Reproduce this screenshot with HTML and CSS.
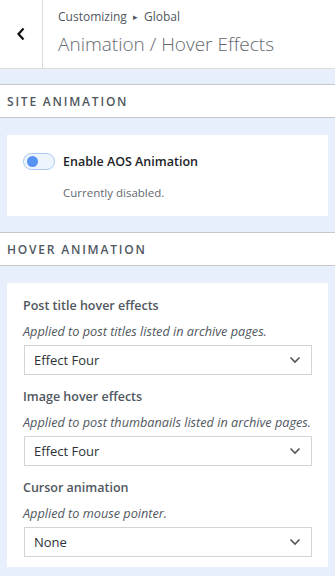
FILE: index.html
```html
<!DOCTYPE html>
<html lang="en">
  <head>
    <meta charset="UTF-8" />
    <meta name="viewport" content="width=device-width, initial-scale=1.0" />
    <title>Animation / Hover Effects</title>
    <link rel="stylesheet" href="styles.css">
  </head>
  <body>
    <header class="section-head">
      <button class="back" type="button" aria-label="Back">
        <svg width="10" height="14" viewBox="0 0 10 14"><path d="M7.5 1.5 L2.5 7 L7.5 12.5" fill="none" stroke="#111" stroke-width="2.2" /></svg>
      </button>
      <div class="titles">
        <span class="crumb">Customizing <span class="arrow">&#9656;</span> Global</span>
        <h3>Animation / Hover Effects</h3>
      </div>
    </header>

    <section class="group">
      <h4 class="group-title">Site Animation</h4>
      <div class="card">
        <label class="toggle-row">
          <span class="toggle"><span class="knob"></span></span>
          <span class="toggle-label">Enable AOS Animation</span>
        </label>
        <p class="status">Currently disabled.</p>
      </div>
    </section>

    <section class="group">
      <h4 class="group-title">Hover Animation</h4>
      <div class="card fields">
        <div class="field">
          <span class="field-title">Post title hover effects</span>
          <span class="field-desc">Applied to post titles listed in archive pages.</span>
          <div class="select"><span>Effect Four</span><svg width="12" height="8" viewBox="0 0 12 8"><path d="M1.5 1.5 L6 6 L10.5 1.5" fill="none" stroke="#555" stroke-width="1.6" /></svg></div>
        </div>
        <div class="field">
          <span class="field-title">Image hover effects</span>
          <span class="field-desc">Applied to post thumbanails listed in archive pages.</span>
          <div class="select"><span>Effect Four</span><svg width="12" height="8" viewBox="0 0 12 8"><path d="M1.5 1.5 L6 6 L10.5 1.5" fill="none" stroke="#555" stroke-width="1.6" /></svg></div>
        </div>
        <div class="field">
          <span class="field-title">Cursor animation</span>
          <span class="field-desc">Applied to mouse pointer.</span>
          <div class="select"><span>None</span><svg width="12" height="8" viewBox="0 0 12 8"><path d="M1.5 1.5 L6 6 L10.5 1.5" fill="none" stroke="#555" stroke-width="1.6" /></svg></div>
        </div>
      </div>
    </section>
  </body>
</html>
```

FILE: styles.css
```css
* {
  box-sizing: border-box;
  margin: 0;
  padding: 0;
}
body {
  background: #e7effc;
  font-family: "Open Sans", "Noto Sans", sans-serif;
  color: #3c434a;
  width: 335px;
  height: 576px;
  overflow: hidden;
}
.section-head {
  display: flex;
  height: 69px;
  background: #fff;
  border-bottom: 1px solid #dcdcde;

  & .back {
    width: 43px;
    height: 100%;
    border: 0;
    border-right: 1px solid #dcdcde;
    background: transparent;
    display: flex;
    align-items: center;
    justify-content: center;
  }
  & .titles {
    padding: 8px 0 0 15px;
    display: flex;
    flex-direction: column;
  }
  & .crumb {
    font-size: 12px;
    line-height: 18px;
    color: #50575e;

    & .arrow {
      font-size: 9px;
      margin: 0 3px;
      position: relative;
      top: -1px;
    }
  }
  & h3 {
    font-size: 19px;
    font-weight: 300;
    line-height: 28px;
    margin-top: 3px;
    color: #646970;
  }
}
.group {
  margin-top: 15px;

  & + .group {
    margin-top: 16px;
  }
}
.group-title {
  background: #fff;
  border-top: 1px solid #c8c8cb;
  border-bottom: 1px solid #c8c8cb;
  height: 34px;
  padding: 0 7px;
  display: flex;
  align-items: center;
  font-size: 12px;
  font-weight: 600;
  letter-spacing: 0.15em;
  text-transform: uppercase;
  color: #50575e;
}
.card {
  background: #fff;
  margin: 17px 7px 0;
  padding: 18px 16px 16px;
}
.toggle-row {
  display: flex;
  align-items: center;
  gap: 8px;
}
.toggle {
  width: 32px;
  height: 17px;
  border: 1px solid #a9c9f5;
  border-radius: 9px;
  background: #eef4fd;
  display: flex;
  align-items: center;
  padding-left: 3px;

  & .knob {
    width: 11px;
    height: 11px;
    border-radius: 50%;
    background: #5592f3;
  }
}
.toggle-label {
  font-size: 12.5px;
  font-weight: 600;
  color: #1d2327;
}
.status {
  font-size: 11.5px;
  color: #646970;
  margin: 15px 0 0 40px;
}
.fields {
  padding: 14px 16px 10px;
  display: flex;
  flex-direction: column;
  gap: 13px;
}
.field {
  display: flex;
  flex-direction: column;

  & .field-title {
    font-size: 12.5px;
    font-weight: 600;
    color: #50575e;
    line-height: 18px;
  }
  & .field-desc {
    font-size: 12.7px;
    font-style: italic;
    color: #50575e;
    line-height: 18px;
    margin-top: 7px;
  }
  & .select {
    margin-top: 5px;
    margin-left: 1px;
    height: 30px;
    border: 1px solid #d4d4d6;
    display: flex;
    align-items: center;
    justify-content: space-between;
    padding: 0 10px 0 9px;
    font-size: 13px;
    color: #2c3338;
  }
}
```
